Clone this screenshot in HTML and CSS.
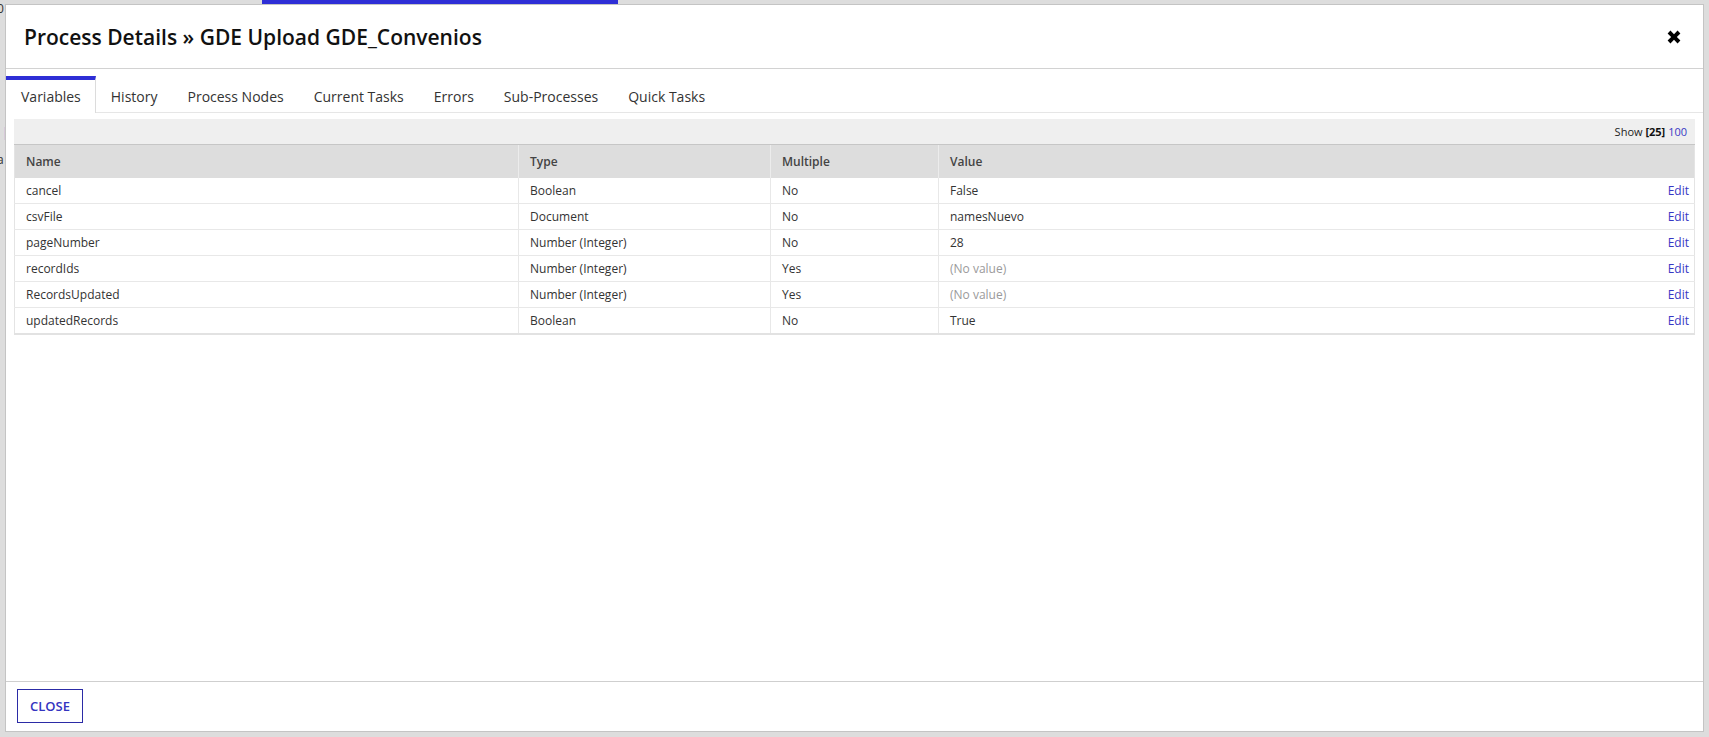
FILE: index.html
```html
<!DOCTYPE html>
<html lang="en">
<head>
    <meta charset="UTF-8">
    <meta name="viewport" content="width=device-width, initial-scale=1.0">
    <title>Process Details</title>
    <link rel="stylesheet" href="styles.css">
</head>
<body>
    <div class="backdrop">
        <div class="loading-bar"></div>
        <span class="peek peek-top">0</span>
        <span class="peek peek-link">|</span>
        <span class="peek peek-letter">a</span>
    </div>

    <div class="overlay">
        <div class="modal">
            <div class="modal-header">
                <h1>Process Details &raquo; GDE Upload GDE_Convenios</h1>
                <button class="close-x" title="Close">
                    <svg width="16" height="16" viewBox="0 0 14 14">
                        <path d="M1.4 3.9 L3.9 1.4 L7 4.5 L10.1 1.4 L12.6 3.9 L9.5 7 L12.6 10.1 L10.1 12.6 L7 9.5 L3.9 12.6 L1.4 10.1 L4.5 7 Z" fill="#000"/>
                    </svg>
                </button>
            </div>

            <div class="tabs">
                <div class="tab active">Variables</div>
                <div class="tab">History</div>
                <div class="tab">Process Nodes</div>
                <div class="tab">Current Tasks</div>
                <div class="tab">Errors</div>
                <div class="tab">Sub-Processes</div>
                <div class="tab">Quick Tasks</div>
            </div>

            <div class="modal-body">
                <div class="toolbar">
                    Show <b>[25]</b> <a href="#">100</a>
                </div>
                <table class="grid">
                    <colgroup>
                        <col class="col-name">
                        <col class="col-type">
                        <col class="col-multiple">
                        <col>
                        <col class="col-action">
                    </colgroup>
                    <thead>
                        <tr>
                            <th>Name</th>
                            <th>Type</th>
                            <th>Multiple</th>
                            <th class="value-head">Value</th>
                            <th class="action"></th>
                        </tr>
                    </thead>
                    <tbody>
                        <tr>
                            <td>cancel</td>
                            <td>Boolean</td>
                            <td>No</td>
                            <td>False</td>
                            <td class="action"><a href="#">Edit</a></td>
                        </tr>
                        <tr>
                            <td>csvFile</td>
                            <td>Document</td>
                            <td>No</td>
                            <td>namesNuevo</td>
                            <td class="action"><a href="#">Edit</a></td>
                        </tr>
                        <tr>
                            <td>pageNumber</td>
                            <td>Number (Integer)</td>
                            <td>No</td>
                            <td>28</td>
                            <td class="action"><a href="#">Edit</a></td>
                        </tr>
                        <tr>
                            <td>recordIds</td>
                            <td>Number (Integer)</td>
                            <td>Yes</td>
                            <td class="empty">(No value)</td>
                            <td class="action"><a href="#">Edit</a></td>
                        </tr>
                        <tr>
                            <td>RecordsUpdated</td>
                            <td>Number (Integer)</td>
                            <td>Yes</td>
                            <td class="empty">(No value)</td>
                            <td class="action"><a href="#">Edit</a></td>
                        </tr>
                        <tr>
                            <td>updatedRecords</td>
                            <td>Boolean</td>
                            <td>No</td>
                            <td>True</td>
                            <td class="action"><a href="#">Edit</a></td>
                        </tr>
                    </tbody>
                </table>
            </div>

            <div class="modal-footer">
                <button class="btn-close">CLOSE</button>
            </div>
        </div>
    </div>
</body>
</html>
```

FILE: styles.css
```css
html, body {
    margin: 0;
    height: 100%;
}
body {
    font-family: "Open Sans", "Noto Sans", sans-serif;
    background-color: #dddddd;
    color: #333;
    overflow: hidden;
}
.backdrop {
    position: absolute;
    top: 0;
    left: 0;
    right: 0;
    bottom: 0;
}
.loading-bar {
    position: absolute;
    top: 0;
    left: 262px;
    width: 356px;
    height: 4px;
    background-color: #2e2ed6;
}
.peek {
    position: absolute;
    font-size: 12px;
    color: #333;
}
.peek-top {
    top: 0;
    left: -3px;
}
.peek-link {
    top: 124px;
    left: 2px;
    color: #3a7bd5;
}
.peek-letter {
    top: 151px;
    left: -3px;
}
.overlay {
    position: relative;
    box-sizing: border-box;
    height: 100%;
    padding: 4px 5px 0 5px;
}
.modal {
    box-sizing: border-box;
    width: 1699px;
    height: 728px;
    background-color: #fff;
    border: 1px solid #c4c4c4;
    display: flex;
    flex-direction: column;
}
.modal-header {
    height: 63px;
    border-bottom: 1px solid #d2d2d2;
    display: flex;
    align-items: center;
    justify-content: space-between;
    padding: 0 21px 0 18px;
}
.modal-header h1 {
    margin: 0;
    font-size: 21px;
    font-weight: 600;
    line-height: 30px;
    color: #111;
}
.close-x {
    border: none;
    background: none;
    padding: 0;
    width: 16px;
    height: 16px;
    cursor: pointer;
}
.close-x svg {
    display: block;
}
.tabs {
    margin-top: 7px;
    display: flex;
    border-bottom: 1px solid #e6e6e6;
}
.tab {
    box-sizing: border-box;
    height: 36px;
    line-height: 33px;
    border-top: 4px solid transparent;
    padding: 0 15px;
    font-size: 14px;
    color: #333;
    cursor: pointer;
}
.tab.active {
    border-top-color: #2e2ed6;
    border-right: 1px solid #dcdcdc;
    padding-right: 14px;
    background-color: #fff;
    height: 37px;
    margin-bottom: -1px;
}
.modal-body {
    flex: 1;
    padding: 6px 8px 0 8px;
}
.toolbar {
    height: 25px;
    line-height: 25px;
    background-color: #efefef;
    border-bottom: 1px solid #c6c6c6;
    text-align: right;
    padding-right: 8px;
    font-size: 11px;
    color: #222;
}
.toolbar b {
    color: #111;
}
.toolbar a, .grid a {
    color: #3838c4;
    text-decoration: none;
}
.grid {
    width: 100%;
    border-collapse: collapse;
    table-layout: fixed;
    font-size: 12px;
    border-left: 1px solid #e4e4e4;
    border-right: 1px solid #e4e4e4;
    border-bottom: 2px solid #e2e2e2;
}
.col-name {
    width: 30%;
}
.col-type {
    width: 15%;
}
.col-multiple {
    width: 10%;
}
.col-action {
    width: 70px;
}
.grid th {
    height: 33px;
    padding: 0 11px;
    text-align: left;
    font-weight: 600;
    color: #444;
    background-color: #dddddd;
    border-left: 1px solid #ececec;
}
.grid th:first-child {
    border-left: none;
}
.grid th.action {
    border-left: none;
}
.grid td {
    height: 25px;
    padding: 0 11px;
    color: #333;
    border-bottom: 1px solid #e8e8e8;
    border-left: 1px solid #e8e8e8;
    white-space: nowrap;
}
.grid td:first-child {
    border-left: none;
}
.grid td.action {
    border-left: none;
    text-align: right;
    padding-right: 5px;
}
.grid td.empty {
    color: #9a9a9a;
}
.modal-footer {
    border-top: 1px solid #cfcfcf;
    padding: 7px 11px 8px 11px;
}
.btn-close {
    width: 66px;
    height: 34px;
    border: 1px solid #2b2ba6;
    background-color: #fff;
    color: #3434c0;
    font-family: "Open Sans", "Noto Sans", sans-serif;
    font-size: 13px;
    font-weight: 600;
    cursor: pointer;
}
```
